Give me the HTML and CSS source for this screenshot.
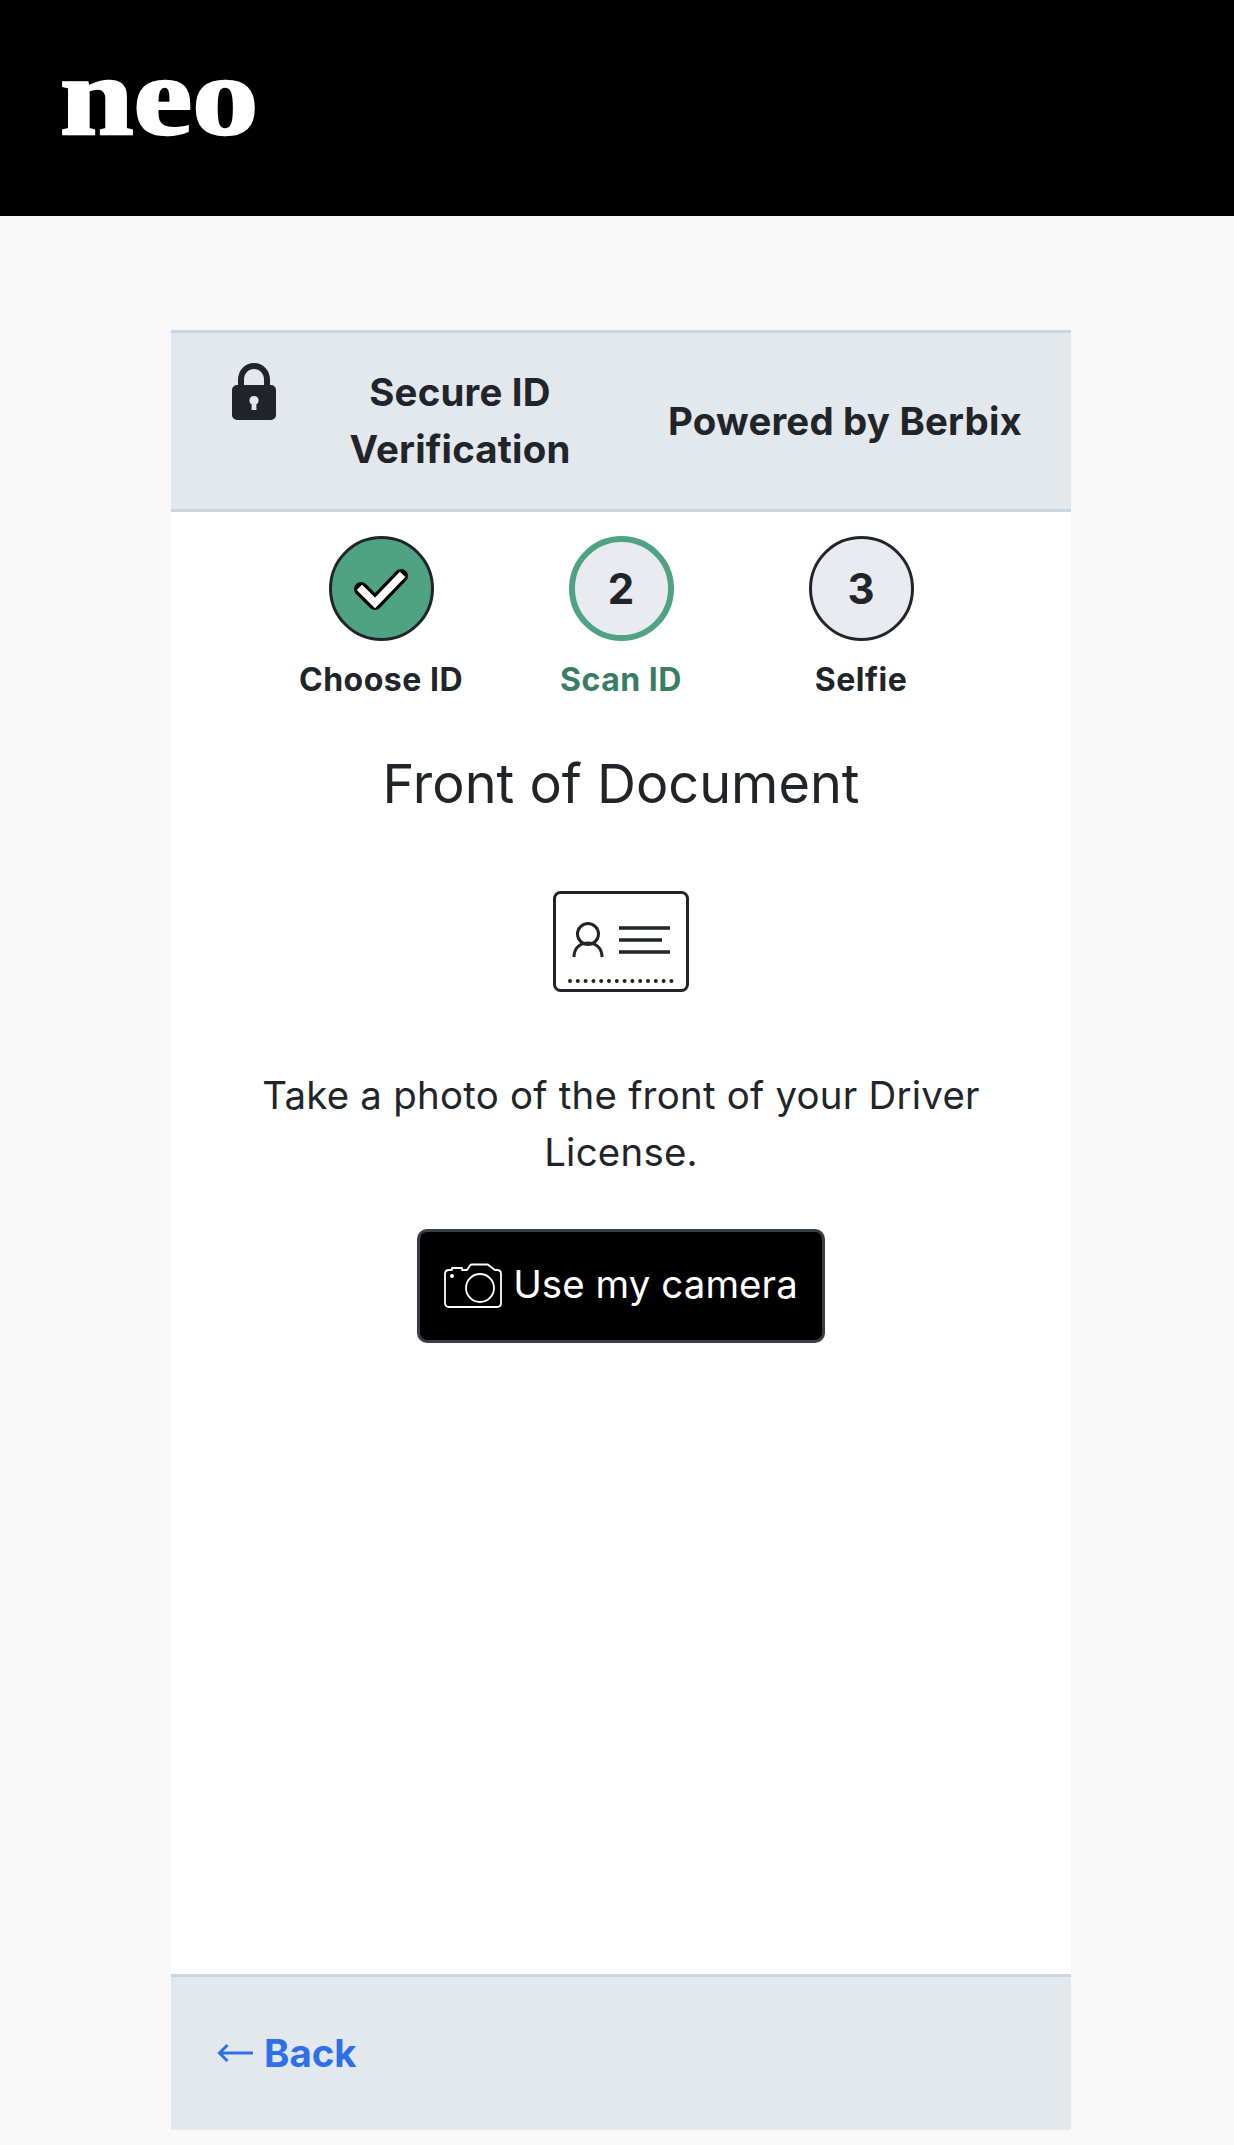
FILE: index.html
```html
<!DOCTYPE html>
<html lang="en">
<head>
    <meta charset="UTF-8">
    <meta name="viewport" content="width=device-width, initial-scale=1.0">
    <title>Secure ID Verification</title>
    <link rel="stylesheet" href="styles.css">
</head>
<body>
    <header class="topbar">
        <span class="logo">neo</span>
    </header>
    <main class="page">
        <section class="card">
            <div class="card-head">
                <svg class="lock" viewBox="0 0 44 57" aria-hidden="true">
                    <path d="M9 24V17C9 9 14.500 3 22 3s13 6 13 14v7" fill="none" stroke="#212529" stroke-width="6"/>
                    <path fill="#212529" fill-rule="evenodd" d="M5 22h34a5 5 0 0 1 5 5v25a5 5 0 0 1-5 5H5a5 5 0 0 1-5-5V27a5 5 0 0 1 5-5zM22 33a4.500 4.500 0 0 0-2.300 8.400L19.500 47h5l-.2-5.600A4.500 4.500 0 0 0 22 33z"/>
                </svg>
                <div class="head-title">Secure ID Verification</div>
                <div class="head-powered">Powered by Berbix</div>
            </div>
            <div class="card-body">
                <ol class="steps">
                    <li class="step done">
                        <span class="step-dot">
                            <svg class="check" viewBox="0 0 56 44" aria-hidden="true">
                                <path d="M8 22l14 14L48 9" fill="none" stroke="#000" stroke-width="14" stroke-linecap="round" stroke-linejoin="round"/>
                                <path d="M9 23l13 13L47 10" fill="none" stroke="#fff" stroke-width="7.500" stroke-linecap="square" stroke-linejoin="miter"/>
                            </svg>
                        </span>
                        <span class="step-label">Choose ID</span>
                    </li>
                    <li class="step current">
                        <span class="step-dot">2</span>
                        <span class="step-label">Scan ID</span>
                    </li>
                    <li class="step">
                        <span class="step-dot">3</span>
                        <span class="step-label">Selfie</span>
                    </li>
                </ol>
                <h1 class="doc-title">Front of Document</h1>
                <svg class="id-icon" viewBox="0 0 136 101" aria-hidden="true">
                    <rect x="1.500" y="1.500" width="133" height="98" rx="6" fill="none" stroke="#212529" stroke-width="3"/>
                    <circle cx="35" cy="43" r="10.500" fill="none" stroke="#212529" stroke-width="3"/>
                    <path d="M21 66c0-9 6-14 14-14s14 5 14 14" fill="none" stroke="#212529" stroke-width="3"/>
                    <path d="M66 37h51M66 49h43M66 61h51" fill="none" stroke="#212529" stroke-width="3.500"/>
                    <path d="M17 90h104" fill="none" stroke="#212529" stroke-width="4" stroke-linecap="round" stroke-dasharray="0 7.800"/>
                </svg>
                <p class="doc-text">Take a photo of the front of your Driver License.</p>
                <button class="camera-btn" type="button">
                    <svg class="camera" viewBox="0 0 58 46" aria-hidden="true">
                        <path d="M5 7h3V5h10v2h5l3-4.500c.5-.8 1-1 2-1h15c1 0 1.500.2 2 1L51 7h2c2.500 0 4 1.500 4 4v29c0 2.500-1.500 4-4 4H5c-2.500 0-4-1.500-4-4V11c0-2.500 1.500-4 4-4z" fill="none" stroke="#fff" stroke-width="1.800" stroke-linejoin="round"/>
                        <circle cx="36" cy="25" r="14" fill="none" stroke="#fff" stroke-width="1.800"/>
                        <circle cx="8" cy="13" r="2" fill="#fff"/>
                    </svg>
                    <span class="camera-label">Use my camera</span>
                </button>
            </div>
            <div class="card-foot">
                <a class="back-link" href="#">
                    <svg class="back-arrow" viewBox="0 0 37 20" aria-hidden="true">
                        <path d="M36 10H3M10.500 2L2.500 10l8 8" fill="none" stroke="#2f6fe8" stroke-width="3"/>
                    </svg>
                    <span>Back</span>
                </a>
            </div>
        </section>
    </main>
</body>
</html>
```

FILE: styles.css
```css
* {
    box-sizing: border-box;
}
body {
    margin: 0;
    background: #f8f8f8;
    font-family: "Inter", "Liberation Sans", sans-serif;
    color: #212529;
}
.topbar {
    height: 216px;
    background: #000;
    padding: 40px 0 0 60px;
}
.logo {
    display: block;
    width: 200px;
    font-family: "Liberation Serif", serif;
    font-weight: 700;
    font-size: 112px;
    line-height: 112px;
    color: #fff;
    -webkit-text-stroke: 2.500px #fff;
    transform: scaleX(1.18);
    transform-origin: left center;
}
.page {
    padding: 114px 0 0 8px;
    display: flex;
    justify-content: center;
}
.card {
    width: 900px;
    height: 1800px;
    background: #fff;
    display: flex;
    flex-direction: column;
}
.card-head {
    height: 182px;
    background: #e3e8ed;
    border-top: 3px solid #cbd5e0;
    border-bottom: 3px solid #cbd5e0;
    display: grid;
    grid-template-columns: 166px 246px 1fr;
    align-items: center;
    font-size: 38.400px;
    font-weight: 700;
    line-height: 57px;
    letter-spacing: 0.200px;
}
.lock {
    width: 44px;
    height: 57px;
    justify-self: center;
    align-self: start;
    margin-top: 30px;
}
.head-title {
    text-align: center;
}
.head-powered {
    text-align: right;
    padding-right: 49px;
}
.card-body {
    flex: 1;
    display: flex;
    flex-direction: column;
    align-items: center;
    padding-top: 24px;
}
.steps {
    list-style: none;
    margin: 0;
    padding: 0;
    display: flex;
}
.step {
    width: 240px;
    display: flex;
    flex-direction: column;
    align-items: center;
}
.step-dot {
    width: 105px;
    height: 105px;
    border-radius: 50%;
    border: 3px solid #212529;
    background: #e9ebf0;
    display: flex;
    align-items: center;
    justify-content: center;
    font-size: 42px;
    font-weight: 700;
}
.step-label {
    margin-top: 15px;
    font-size: 32px;
    line-height: 48px;
    font-weight: 700;
    letter-spacing: 0.500px;
}
.step.done .step-dot {
    background: #4fa382;
}
.step.current .step-dot {
    border: 6px solid #4fa382;
}
.step.current .step-label {
    color: #3a7d64;
}
.check {
    width: 56px;
    height: 44px;
}
.doc-title {
    margin: 44px 0 0;
    font-size: 54px;
    line-height: 72px;
    font-weight: 400;
}
.id-icon {
    width: 136px;
    height: 101px;
    margin-top: 71px;
}
.doc-text {
    width: 740px;
    margin: 75px 0 0;
    font-size: 38.400px;
    line-height: 57px;
    letter-spacing: 0.250px;
    text-align: center;
}
.camera-btn {
    width: 408px;
    height: 114px;
    margin-top: 48px;
    background: #000;
    border: 3px solid #3a3f47;
    border-radius: 10px;
    color: #fff;
    font: inherit;
    font-size: 38.400px;
    display: flex;
    align-items: center;
    justify-content: center;
    gap: 11px;
    padding: 0;
}
.camera-label {
    margin-bottom: 5px;
    letter-spacing: 0.100px;
}
.camera {
    width: 58px;
    height: 46px;
}
.card-foot {
    height: 156px;
    background: #e3e8ed;
    border-top: 3px solid #cbd5e0;
    padding: 52px 0 0 46px;
}
.back-link {
    display: inline-flex;
    align-items: center;
    gap: 10px;
    color: #2f6fe8;
    font-size: 38.400px;
    line-height: 48px;
    font-weight: 700;
    text-decoration: none;
}
.back-arrow {
    width: 37px;
    height: 20px;
}
```
